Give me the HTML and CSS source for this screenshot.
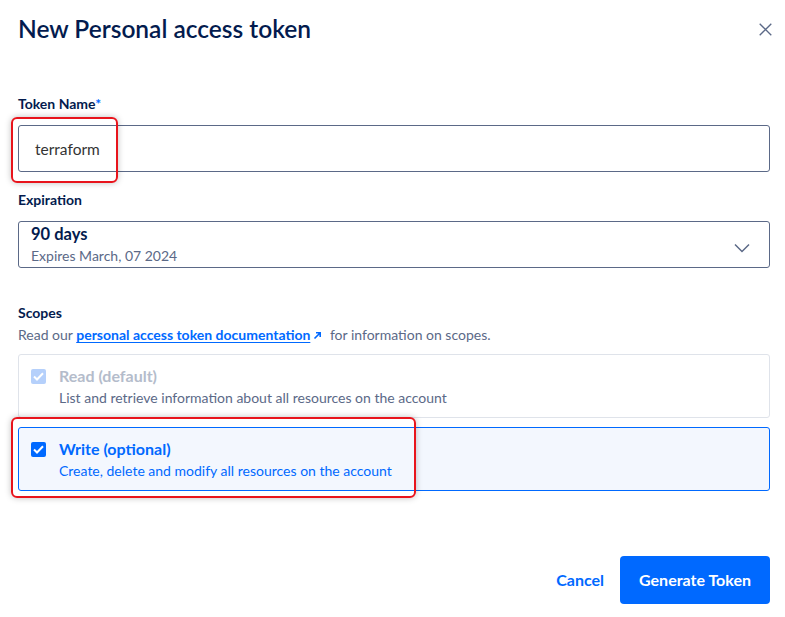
FILE: index.html
```html
<!DOCTYPE html>
<html>
<head>
<meta charset="utf-8">
<link rel="stylesheet" href="styles.css">
</head>
<body>
<div class="dialog">
  <div class="header">
    <h1 class="title">New Personal access token</h1>
    <button class="close" aria-label="Close">
      <svg width="13" height="13" viewBox="0 0 13 13"><path d="M0.7 0.7L12.3 12.3M12.3 0.7L0.7 12.3" stroke="#5b6987" stroke-width="1.3" fill="none"/></svg>
    </button>
  </div>

  <div class="field field-name">
    <label class="label">Token Name<span class="req">*</span></label>
    <div class="input">terraform</div>
    <div class="mark mark-name"></div>
  </div>

  <div class="field">
    <label class="label">Expiration</label>
    <div class="select">
      <div class="select-text">
        <div class="select-main">90 days</div>
        <div class="select-sub">Expires March, 07 2024</div>
      </div>
      <svg class="chev" width="16" height="10" viewBox="0 0 16 10"><path d="M1 1.5L8 8.5L15 1.5" stroke="#5b6987" stroke-width="1.5" fill="none"/></svg>
    </div>
  </div>

  <div class="scopes">
    <div class="label">Scopes</div>
    <p class="help">Read our <a class="link" href="#">personal access token documentation<svg width="9" height="9" viewBox="0 0 9 9"><path d="M1.5 7.5L7 2M3 1.8H7.2V6" stroke="#0069ff" stroke-width="1.6" fill="none"/></svg></a> for information on scopes.</p>

    <div class="scope scope-read">
      <span class="cb cb-disabled"><svg width="11" height="9" viewBox="0 0 11 9"><path d="M1 4.5L4 7.5L10 1.2" stroke="#fff" stroke-width="2" fill="none"/></svg></span>
      <div>
        <div class="scope-title">Read (default)</div>
        <div class="scope-desc">List and retrieve information about all resources on the account</div>
      </div>
    </div>

    <div class="scope scope-write">
      <span class="cb"><svg width="11" height="9" viewBox="0 0 11 9"><path d="M1 4.5L4 7.5L10 1.2" stroke="#fff" stroke-width="2" fill="none"/></svg></span>
      <div>
        <div class="scope-title">Write (optional)</div>
        <div class="scope-desc">Create, delete and modify all resources on the account</div>
      </div>
      <div class="mark mark-write"></div>
    </div>
  </div>

  <div class="footer">
    <button class="cancel">Cancel</button>
    <button class="primary">Generate Token</button>
  </div>
</div>
</body>
</html>
```

FILE: styles.css
```css
* { box-sizing: border-box; }
html, body { margin: 0; padding: 0; background: #fff; }
body {
  font-family: "Lato", "Liberation Sans", sans-serif;
  color: #031b4e;
}
.dialog {
  width: 785px;
  padding: 0 15px 0 18px;
}
.header {
  display: flex;
  justify-content: space-between;
  align-items: center;
  height: 58px;
}
.title {
  margin: 0;
  font-size: 24.5px;
  font-weight: 600;
  color: #031b4e;
  line-height: 30px;
}
.close {
  border: 0;
  background: none;
  padding: 0;
  margin-right: -2px;
  margin-top: 1px;
  width: 13px;
  height: 13px;
  display: flex;
}
.field { position: relative; }
.field-name { margin-top: 38px; }
.label {
  display: block;
  font-size: 14px;
  font-weight: 700;
  color: #031b4e;
  line-height: 16px;
  margin-bottom: 13px;
}
.req { color: #0069ff; }
.input {
  height: 47px;
  border: 1px solid #5b6987;
  border-radius: 3px;
  padding: 0 16px;
  display: flex;
  align-items: center;
  font-size: 15.5px;
  color: #333;
  margin-bottom: 20px;
}
.select {
  height: 47px;
  border: 1px solid #5b6987;
  border-radius: 3px;
  padding: 0 19px 0 12px;
  display: flex;
  align-items: center;
  justify-content: space-between;
}
.select-main { font-size: 16.5px; font-weight: 700; color: #031b4e; line-height: 18px; }
.select-sub { font-size: 14px; color: #5b6987; line-height: 16px; margin-top: 5px; }
.chev { margin-top: 6px; }
.scopes { margin-top: 37px; }
.scopes .label { margin-bottom: 6px; }
.help {
  margin: 0 0 11px;
  font-size: 14px;
  line-height: 16px;
  color: #5b6987;
}
.link {
  color: #0069ff;
  font-weight: 700;
  text-decoration: underline;
  text-underline-offset: 2px;
}
.link svg { margin-left: 3px; margin-right: 4px; }
.scope {
  position: relative;
  display: flex;
  gap: 13px;
  height: 64px;
  padding: 12px 12px;
  border: 1px solid #dfe3ea;
  border-radius: 3px;
}
.scope-write {
  margin-top: 9px;
  border-color: #0069ff;
  background: #f3f7fe;
}
.cb {
  flex: none;
  width: 15px;
  height: 15px;
  margin-top: 2px;
  border-radius: 2px;
  background: #0069ff;
  display: flex;
  align-items: center;
  justify-content: center;
}
.cb-disabled { background: #b5d0fb; }
.scope-title { font-size: 16px; font-weight: 700; line-height: 18px; }
.scope-desc { font-size: 14px; line-height: 16px; margin-top: 5px; }
.scope-read .scope-title { color: #b4bccb; }
.scope-read .scope-desc { color: #5b6987; }
.scope-write .scope-title { color: #0069ff; }
.scope-write .scope-desc { color: #0069ff; }
.footer {
  margin-top: 65px;
  display: flex;
  justify-content: flex-end;
  align-items: center;
  gap: 16px;
}
.cancel {
  border: 0;
  background: none;
  font-family: inherit;
  font-size: 16px;
  font-weight: 700;
  color: #0069ff;
  padding: 0 0 2px;
}
.primary {
  border: 0;
  background: #0069ff;
  color: #fff;
  font-family: inherit;
  font-size: 16px;
  font-weight: 700;
  height: 48px;
  width: 150px;
  border-radius: 4px;
  padding-bottom: 2px;
}
.mark {
  position: absolute;
  border: 2px solid #e8141c;
  border-radius: 6px;
  box-shadow: 0 0 6px rgba(0,0,0,0.25);
  pointer-events: none;
}
.mark-name { left: -7px; top: 21px; width: 107px; height: 66px; }
.mark-write { left: -8px; top: -11px; width: 405px; height: 81px; }
```
